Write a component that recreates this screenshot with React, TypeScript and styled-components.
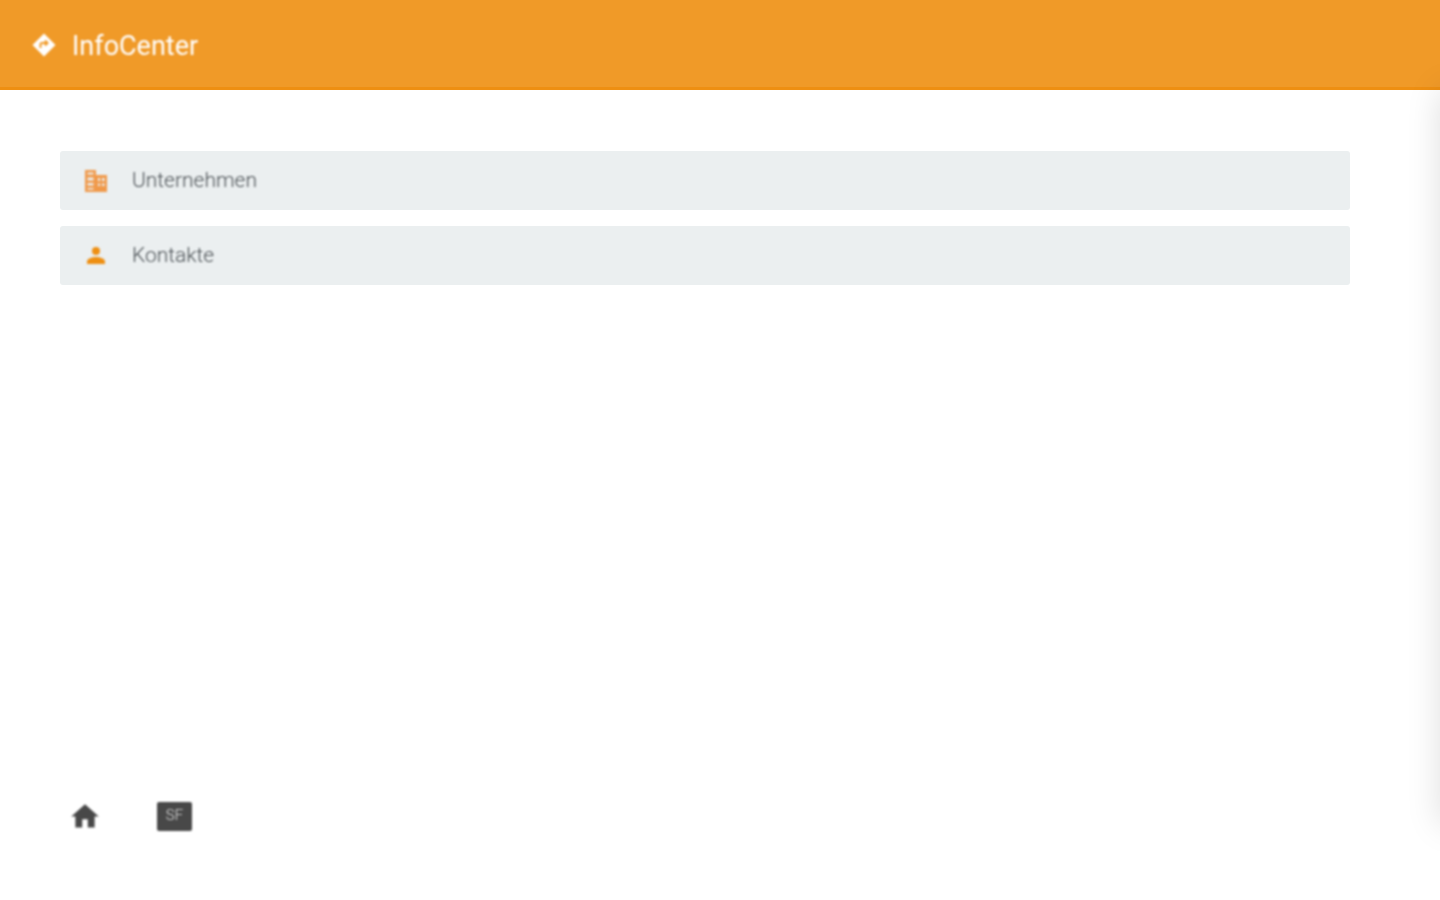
import React from "react";
import styled, { createGlobalStyle } from "styled-components";

const Global = createGlobalStyle`
  html, body { margin: 0; padding: 0; background: #fff; }
  body { font-family: Roboto, "Liberation Sans", sans-serif; overflow: hidden; }
`;

const Page = styled.div`
  height: 900px;
  display: flex;
  flex-direction: column;
  position: relative;
  overflow: hidden;
`;

const Header = styled.header`
  height: 85px;
  flex: none;
  background: #f09a28;
  border-bottom: 3px solid #ee8f12;
  display: flex;
  align-items: center;
  gap: 16px;
  padding: 2px 0 0 32px;
  box-sizing: content-box;
`;

const Title = styled.h1`
  margin: 2px 0 0;
  font-size: 27px;
  font-weight: 400;
  color: #fff;
  filter: blur(0.8px);
`;

const Blur = styled.span`
  display: inline-flex;
  filter: blur(0.8px);
`;

const List = styled.main`
  flex: 1;
  padding: 61px 90px 0 60px;
  display: flex;
  flex-direction: column;
  gap: 16px;
`;

const Row = styled.div`
  height: 59px;
  background: #ebeff0;
  border-radius: 3px;
  display: flex;
  align-items: center;
  padding-left: 24px;
  gap: 24px;
`;

const RowIcon = styled.span`
  width: 24px;
  display: flex;
  justify-content: center;
  filter: blur(0.8px);
`;

const RowLabel = styled.span`
  font-size: 21px;
  font-weight: 300;
  color: #4a5054;
  margin-top: -2px;
  filter: blur(0.8px);
`;

const Footer = styled.footer`
  height: 100px;
  flex: none;
  padding-left: 68px;
  display: flex;
  gap: 55px;
  align-items: flex-start;
`;

const SfBadge = styled.span`
  width: 35px;
  height: 29px;
  margin-top: 2px;
  background: #484848;
  border-radius: 2px;
  color: #e4e4e4;
  font-size: 15px;
  font-weight: 300;
  line-height: 27px;
  text-align: center;
  filter: blur(0.8px);
`;

const OffscreenDrawer = styled.div`
  position: absolute;
  top: 90px;
  left: 1440px;
  width: 300px;
  height: 735px;
  box-shadow: 0 0 32px rgba(0, 0, 0, 0.13);
`;

export default function App() {
  return (
    <Page>
      <Global />
      <Header>
        <Blur>
          <svg width="24" height="24" viewBox="0 0 24 24">
            <path fill="#fff" d="M12 .5 23.500 12 12 23.500.5 12Z" />
            <path fill="none" stroke="#f09a28" strokeWidth="2" d="M8.500 15v-3.500a1.500 1.500 0 0 1 1.500-1.500h5M13 7.500l2.500 2.500-2.500 2.500" />
          </svg>
        </Blur>
        <Title>InfoCenter</Title>
      </Header>
      <List>
        <Row>
          <RowIcon>
            <svg width="24" height="24" viewBox="0 0 24 24" fill="#f0994a">
              <path fillRule="evenodd" d="M1 1h11v5h11v17H1ZM3.500 3.500v2h6v-2ZM3.500 8.500v3h6v-3Zm0 5.500v2.500h6V14Zm0 5v1.500h6V19ZM14 9v3h2V9Zm4 0v3h2.500V9Zm-4 5.500v2.500h2v-2.500Zm4 0v2.500h2.500v-2.500Z" />
            </svg>
          </RowIcon>
          <RowLabel>Unternehmen</RowLabel>
        </Row>
        <Row>
          <RowIcon>
            <svg width="24" height="24" viewBox="0 0 24 24" fill="#ee8f12">
              <circle cx="12" cy="7" r="4" />
              <path d="M3 20V17.500C3 14.500 8 13 12 13s9 1.500 9 4.500V20Z" />
            </svg>
          </RowIcon>
          <RowLabel>Kontakte</RowLabel>
        </Row>
      </List>
      <Footer>
        <Blur>
          <svg width="34" height="33" viewBox="0 0 24 24" fill="#484848">
            <path d="M10 20v-6h4v6h5v-8h3L12 3 2 12h3v8z" />
          </svg>
        </Blur>
        <SfBadge>SF</SfBadge>
      </Footer>
      <OffscreenDrawer />
    </Page>
  );
}
